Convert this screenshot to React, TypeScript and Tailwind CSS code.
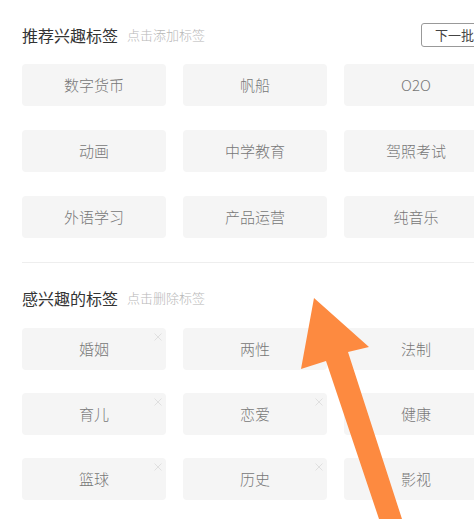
import React from "react";

const rec = [
  "数字货币", "帆船", "O2O",
  "动画", "中学教育", "驾照考试",
  "外语学习", "产品运营", "纯音乐",
];
const mine = [
  "婚姻", "两性", "法制",
  "育儿", "恋爱", "健康",
  "篮球", "历史", "影视",
];

function Tile({ label, close }: { label: string; close?: boolean }) {
  return (
    <div className="relative h-[42px] rounded-[4px] bg-[#f5f5f5] flex items-center justify-center text-[15px] text-[#777] font-light">
      {label}
      {close && (
        <svg className="absolute right-[4px] top-[5px]" width="8" height="8" viewBox="0 0 8 8">
          <path d="M0.5 0.5 L7.5 7.5 M7.5 0.5 L0.5 7.5" stroke="#e0e0e0" strokeWidth="1" />
        </svg>
      )}
    </div>
  );
}

export default function App() {
  return (
    <div
      className="relative w-[474px] h-[519px] overflow-hidden bg-white"
      style={{ fontFamily: '"Noto Sans CJK SC", "Noto Sans", sans-serif' }}
    >
      <div className="w-[510px] px-[22px] pt-[23px]">
        <div className="flex items-center justify-between h-[24px]">
          <div className="flex items-center">
            <span className="text-[16px] text-[#333] font-normal">推荐兴趣标签</span>
            <span className="ml-[9px] text-[13px] text-[#b8b8b8] font-light">点击添加标签</span>
          </div>
          <div className="h-[24px] w-[67px] border border-[#999] rounded-[3px] flex items-center justify-center text-[13px] text-[#444]">
            下一批
          </div>
        </div>
        <div className="mt-[17px] grid grid-cols-[144px_144px_144px] gap-x-[17px] gap-y-[24px]">
          {rec.map((t) => (
            <Tile key={t} label={t} />
          ))}
        </div>
        <div className="mt-[24px] h-px bg-[#eeeeee]" />
        <div className="mt-[23px] flex items-center h-[24px]">
          <span className="text-[16px] text-[#333] font-normal">感兴趣的标签</span>
          <span className="ml-[9px] text-[13px] text-[#b8b8b8] font-light">点击删除标签</span>
        </div>
        <div className="mt-[18px] grid grid-cols-[144px_144px_144px] gap-x-[17px] gap-y-[23px]">
          {mine.map((t) => (
            <Tile key={t} label={t} close />
          ))}
        </div>
      </div>
      <svg className="absolute inset-0 pointer-events-none" width="474" height="519" viewBox="0 0 474 519">
        <polygon
          points="314,298 301,369 326,361 379,519 402,519 348,352 369,347"
          fill="#fd8a40"
        />
      </svg>
    </div>
  );
}
